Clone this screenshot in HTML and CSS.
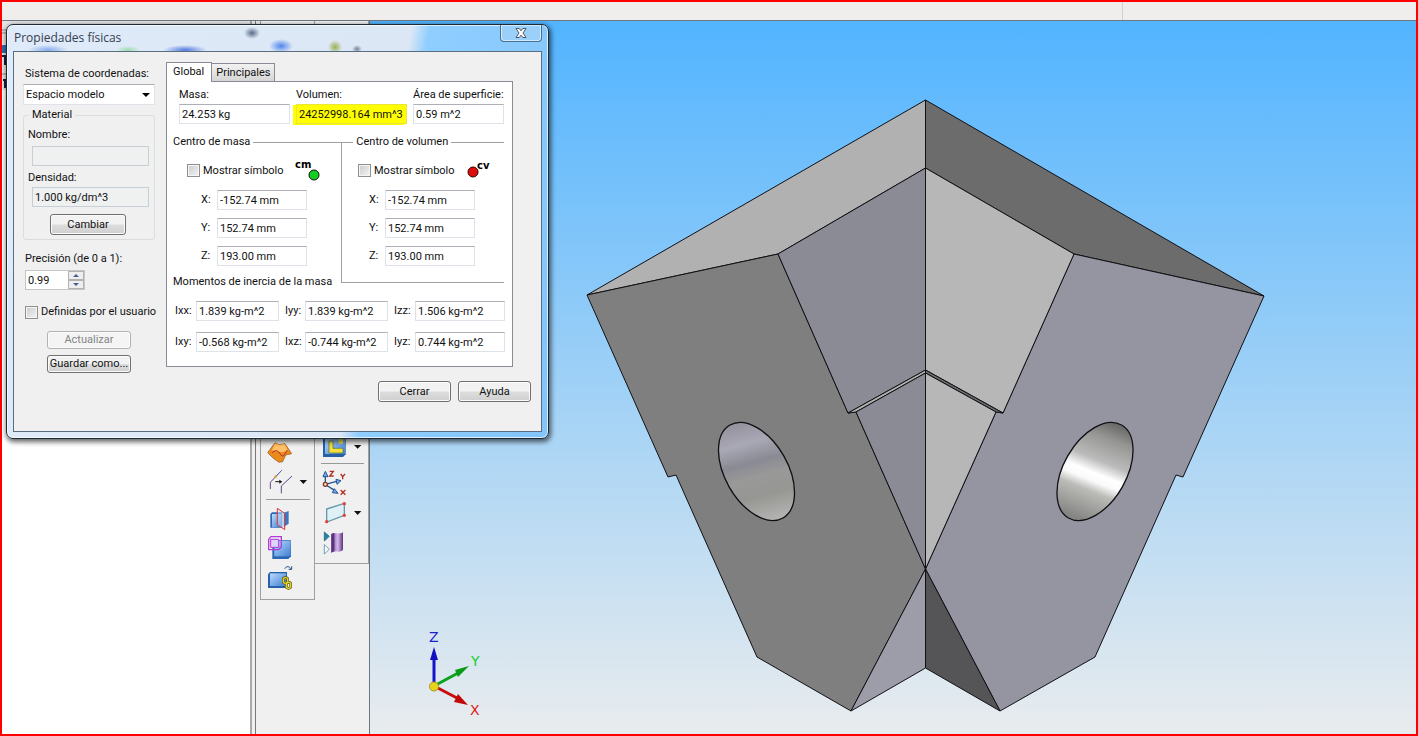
FILE: index.html
```
<!DOCTYPE html>
<html lang="es">
<head>
<meta charset="utf-8">
<title>Propiedades físicas</title>
<link rel="stylesheet" href="styles.css">
</head>
<body>
<div class="app">
  <header class="ribbon"><span class="ribbon-main"></span><span class="ribbon-end"></span></header>
  <div class="workspace">
    <aside class="tree">
      <div class="tree-tools">
        <svg class="tree-icon" viewBox="0 0 6 68" aria-hidden="true"><path d="M0 9h6M0 12h6M0 53h6" stroke="#8b8b8b"/><path d="M0 24h6v8H0z" fill="#2d6fb5"/><path d="M0 35h6M3 35v9M1 59h5M3 59v8" stroke="#14204a" stroke-width="2"/></svg>
      </div>
    </aside>
    <div class="splitter"></div>
    <nav class="tools" aria-label="Herramientas">
      <div class="tool-column column-a">
        <button class="tool" aria-label="Superficie"><svg viewBox="63 30 132 78"><path d="M68 68l22-30 12 6 18-3 20 30-18 4-9 20-11 2-17-12z" fill="#e88a1c" stroke="#945010" stroke-width="2"/><path d="M90 40l13 5 16-3 10 20-20 5-28-6z" fill="#ffc067"/><path d="M82 68c14-14 20 0 27 8s12-8 18-16" fill="none" stroke="#b3242c" stroke-width="3"/></svg></button>
        <button class="tool" aria-label="Desplazar curva"><svg viewBox="63 108 132 90"><path d="M76 177v-20l34-36M109 190v-22l32-30" fill="none" stroke="#62458a" stroke-width="3"/><path d="M94 138l16-17" stroke="#4d80bd" stroke-width="3"/><circle cx="92" cy="140" r="4" fill="#e5a23b"/><path d="M91 155h14" stroke="#111" stroke-width="3"/><path d="M103 149l9 6-9 6zM164 150h22l-11 12z" fill="#111"/></svg></button>
        <hr>
        <button class="tool" aria-label="Plano de corte"><svg viewBox="63 222 132 90"><defs><linearGradient id="blue" x2="1" y2="1"><stop stop-color="#b9dcff"/><stop offset="1" stop-color="#3f7fd0"/></linearGradient></defs><path d="M76 252l5-5h31v46H76z" fill="#2c66b5"/><path d="M81 252h29v40H81z" fill="url(#blue)"/><path d="M116 248l15-5v38l-15 10z" fill="#3978c5"/><path d="M97 235l22 15v49l-22-15z" fill="#cfe0f4" fill-opacity=".5" stroke="#e03434" stroke-width="3"/></svg></button>
        <button class="tool" aria-label="Contorno"><svg viewBox="63 312 132 90"><path d="M82 340l8-9h48v48l-8 8H82z" fill="#2c66b5"/><path d="M88 333h49v46H88z" fill="url(#blue)"/><path d="M71 328l7-8h31v31l-8 8H71z" fill="none" stroke="#b338dd" stroke-width="4"/><path d="M77 328h24v24H77z" fill="#dcd4fa" stroke="#b338dd" stroke-width="3"/></svg></button>
        <button class="tool" aria-label="Vincular pieza"><svg viewBox="63 402 132 90"><path d="M69 433l6-7h51v40l-6 8H69z" fill="#285fa9"/><path d="M75 430h48v38H75z" fill="url(#blue)"/><path d="M119 416c6-9 14-7 18 0M140 409v9h-9" fill="none" stroke="#1e477f" stroke-width="3"/><g fill="none" stroke="#5e5711" stroke-width="8"><rect x="115" y="443" width="13" height="17" rx="6"/><rect x="124" y="457" width="13" height="18" rx="6"/></g><g fill="none" stroke="#e3d51e" stroke-width="4"><rect x="115" y="443" width="13" height="17" rx="6"/><rect x="124" y="457" width="13" height="18" rx="6"/></g></svg></button>
      </div>
      <div class="tool-column column-b">
        <button class="tool tool-short" aria-label="Operación"><svg viewBox="228 24 132 66"><path d="M234 22h68v48l-8 8h-60z" fill="#275ea8"/><path d="M240 20h60v49h-60z" fill="url(#blue)"/><path d="M252 30h12v22h30v14h-42z" fill="#f5df38" stroke="#5c6b3b" stroke-width="2"/><path d="M281 22h13v16h-13z" fill="#f5df38"/><path d="M327 42h22l-11 11z" fill="#111"/></svg></button>
        <hr>
        <button class="tool" aria-label="Sistema de coordenadas"><svg viewBox="228 108 132 90"><path d="M241 160v-24M241 160l34-9M243 162l27 17" stroke="#235397" stroke-width="4"/><path d="M234 137l7-16 8 16zM273 145l15 4-12 11zM268 173l11 14-17-2z" fill="#7daadf" stroke="#235397" stroke-width="3"/><circle cx="241" cy="160" r="6" fill="#f6e7c5" stroke="#8a321d" stroke-width="4"/><path d="M254 121h11l-11 14h12M287 129l6 8 7-8M293 137v8M287 177l14 14M301 177l-14 14" fill="none" stroke="#b42c25" stroke-width="4"/></svg></button>
        <button class="tool" aria-label="Plano"><svg viewBox="228 198 132 90"><path d="M245 234l53-17v36l-53 20z" fill="#dff1f6" stroke="#6799ab" stroke-width="4"/><g fill="#e34036"><circle cx="298" cy="218" r="5"/><circle cx="245" cy="272" r="5"/><circle cx="298" cy="253" r="5"/></g><path d="M327 240h22l-11 12z" fill="#111"/></svg></button>
        <button class="tool" aria-label="Simetría"><svg viewBox="228 288 132 90"><defs><linearGradient id="purple"><stop stop-color="#6b4390"/><stop offset=".55" stop-color="#d7b9ec"/><stop offset="1" stop-color="#5b317d"/></linearGradient></defs><path d="M238 303v27l15-14z" fill="#2188a8" stroke="#19547e" stroke-width="2"/><path d="M238 341v28l15-14z" fill="#fff" stroke="#2c719c" stroke-width="2"/><path d="M259 309c10-8 24 4 35-5v53c-11 11-25-1-35 8z" fill="url(#purple)"/><path d="M259 309v56l9-4v-55z" fill="#5a3280"/></svg></button>
      </div>
    </nav>
    <main class="viewport">
      <svg class="model" viewBox="370 21 1046 713" preserveAspectRatio="xMidYMid slice" role="img" aria-label="Modelo 3D">
        <defs>
          <linearGradient id="hole-left" gradientUnits="userSpaceOnUse" x1="742" y1="424" x2="768" y2="520"><stop stop-color="#96949f"/><stop offset=".2" stop-color="#a9a8b5"/><stop offset=".4" stop-color="#8a8a94"/><stop offset=".55" stop-color="#999"/><stop offset=".75" stop-color="#969693"/><stop offset="1" stop-color="#b2b2b0"/></linearGradient>
          <linearGradient id="hole-right" gradientUnits="userSpaceOnUse" x1="1117" y1="424" x2="1079" y2="518"><stop stop-color="#686866"/><stop offset=".17" stop-color="#969694"/><stop offset=".4" stop-color="#bbb"/><stop offset=".53" stop-color="#fff"/><stop offset=".61" stop-color="#fafafa"/><stop offset=".71" stop-color="#bbbbb8"/><stop offset="1" stop-color="#868684"/></linearGradient>
          <clipPath id="clip-left"><ellipse cx="756.5" cy="471.5" rx="53" ry="31" transform="rotate(60.3 756.5 471.5)"/></clipPath>
          <clipPath id="clip-right"><ellipse cx="1095" cy="471.500" rx="53" ry="31" transform="rotate(-60.3 1095 471.5)"/></clipPath>
        </defs>
        <g stroke="#101014" stroke-width="1" stroke-linejoin="round">
          <path fill="#b1b1b1" d="M925.500 100V168L778 254 587 295Z"/>
          <path fill="#6c6c6c" d="M925.500 100L1264 296 1074 254 925.500 168Z"/>
          <path fill="#7f7f7f" d="M587 295L778 254 848 413 856 412 925.500 569 851 711 757 657 676 475 668 477Z"/>
          <path fill="#9595a1" d="M1264 296L1183 477 1176 475 1095 657 1000 711 925.500 569 996 412 1003 413 1074 254Z"/>
          <path fill="#8b8b95" d="M925.500 168L778 254 848 413 925.500 370Z"/>
          <path fill="#b7b7b7" d="M925.500 168L1074 254 1003 413 925.500 370Z"/>
          <path fill="#b0b0b0" d="M848 413L925.500 370V373L856 412Z"/>
          <path fill="#6c6c6c" d="M1003 413L925.500 370V373L996 412Z"/>
          <path fill="#8b8b95" d="M856 412L925.500 373V569Z"/>
          <path fill="#b7b7b7" d="M996 412L925.500 373V569Z"/>
          <path fill="#9d9da9" d="M925.500 569L851 711 925.500 668Z"/>
          <path fill="#555557" d="M925.500 569L1000 711 925.500 668Z"/>
        </g>
        <path clip-path="url(#clip-left)" fill="url(#hole-left)" d="M700 410h110v120H700z"/>
        <path clip-path="url(#clip-right)" fill="url(#hole-right)" d="M1040 410h110v120h-110z"/>
        <g fill="none" stroke="#101014" stroke-width="1.300">
          <ellipse cx="756.5" cy="471.5" rx="53.500" ry="31.400" transform="rotate(60.3 756.5 471.5)"/>
          <ellipse cx="1095" cy="471.5" rx="53.500" ry="31.400" transform="rotate(-60.3 1095 471.5)"/>
        </g>
        <path d="M434 686V656" stroke="#1414c8" stroke-width="3"/><path d="M430 660L434 647 438 660Z" fill="#1010c0"/>
        <path d="M434 686L458 673" stroke="#0ca21d" stroke-width="3"/><path d="M455 670L469 666 458 677Z" fill="#079b16"/>
        <path d="M434 686L457 698" stroke="#c90c0c" stroke-width="3"/><path d="M458 694L468 705 454 702Z" fill="#c40808"/>
        <circle cx="434" cy="686.500" r="4.500" fill="#e8d31b" stroke="#ac961b"/>
        <g class="axis-label"><text x="429" y="642" fill="#2020cf">Z</text><text x="471" y="666" fill="#18cf28">Y</text><text x="470" y="715" fill="#e01a1a">X</text></g>
      </svg>
    </main>
  </div>

  <section class="dialog" role="dialog" aria-labelledby="dialog-title">
    <div class="titlebar">
      <h1 id="dialog-title">Propiedades físicas</h1>
      <button class="close" aria-label="Cerrar ventana"><svg viewBox="0 0 12 10"><path d="M1 .5h3.200L6 2.800 7.800.500H11L8 5l3 4.500H7.800L6 7.200 4.200 9.500H1L4 5z" fill="#fff" stroke="#4c5668"/></svg></button>
    </div>
    <form class="client">
      <div class="left">
        <label class="inset" for="coords">Sistema de coordenadas:</label>
        <div class="select-wrap"><select id="coords"><option>Espacio modelo</option></select></div>
        <fieldset class="material">
          <legend>Material</legend>
          <label for="name">Nombre:</label><input id="name" readonly>
          <label for="density">Densidad:</label><input id="density" value="1.000 kg/dm^3" readonly>
          <button type="button" class="btn">Cambiar</button>
        </fieldset>
        <label class="inset" for="precision">Precisión (de 0 a 1):</label>
        <div class="spinner">
          <input id="precision" value="0.99">
          <div class="steps"><button type="button" aria-label="Aumentar"><svg viewBox="0 0 6 3"><path d="M0 3L3 0 6 3z"/></svg></button><button type="button" aria-label="Disminuir"><svg viewBox="0 0 6 3"><path d="M0 0L3 3 6 0z"/></svg></button></div>
        </div>
        <label class="check user-check"><input type="checkbox">Definidas por el usuario</label>
        <div class="stack"><button type="button" class="btn small" disabled>Actualizar</button><button type="button" class="btn small">Guardar como...</button></div>
      </div>
      <div class="right">
        <div class="tabs" role="tablist"><button type="button" class="tab active" role="tab" aria-selected="true">Global</button><button type="button" class="tab" role="tab" aria-selected="false">Principales</button></div>
        <div class="panel" role="tabpanel">
          <div class="totals">
            <div class="field"><label for="mass">Masa:</label><input id="mass" value="24.253 kg"></div>
            <div class="field marked"><label for="volume">Volumen:</label><input id="volume" value="24252998.164 mm^3"></div>
            <div class="field"><label for="area">Área de superficie:</label><input id="area" value="0.59 m^2"></div>
          </div>
          <div class="heads"><h2>Centro de masa</h2><span class="rule mass-rule"></span><h2>Centro de volumen</h2><span class="rule"></span></div>
          <div class="centers">
            <div class="center mass-center">
              <div class="symbol"><label class="check"><input type="checkbox">Mostrar símbolo</label>
                <svg class="marker" viewBox="0 0 26 22" aria-hidden="true"><text x="0" y="8">cm</text><circle cx="19" cy="15" r="5" fill="#12ce22" stroke="#111"/></svg></div>
              <div class="xyz"><label for="mx">X:</label><input id="mx" value="-152.74 mm"><label for="my">Y:</label><input id="my" value="152.74 mm"><label for="mz">Z:</label><input id="mz" value="193.00 mm"></div>
            </div>
            <div class="center volume-center">
              <div class="symbol"><label class="check"><input type="checkbox">Mostrar símbolo</label>
                <svg class="marker" viewBox="0 0 26 22" aria-hidden="true"><circle cx="7" cy="12" r="5" fill="#e00d0d" stroke="#300"/><text x="11" y="9">cv</text></svg></div>
              <div class="xyz"><label for="vx">X:</label><input id="vx" value="-152.74 mm"><label for="vy">Y:</label><input id="vy" value="152.74 mm"><label for="vz">Z:</label><input id="vz" value="193.00 mm"></div>
            </div>
          </div>
          <div class="heads moments-head"><h2>Momentos de inercia de la masa</h2><span class="rule"></span></div>
          <div class="moments">
            <label for="ixx">Ixx:</label><input id="ixx" value="1.839 kg-m^2">
            <label for="iyy">Iyy:</label><input id="iyy" value="1.839 kg-m^2">
            <label for="izz">Izz:</label><input id="izz" value="1.506 kg-m^2">
            <label for="ixy">Ixy:</label><input id="ixy" value="-0.568 kg-m^2">
            <label for="ixz">Ixz:</label><input id="ixz" value="-0.744 kg-m^2">
            <label for="iyz">Iyz:</label><input id="iyz" value="0.744 kg-m^2">
          </div>
        </div>
        <div class="actions"><button type="button" class="btn">Cerrar</button><button type="button" class="btn">Ayuda</button></div>
      </div>
    </form>
  </section>
</div>
</body>
</html>
```
FILE: styles.css
```
* { box-sizing: border-box; }
body { margin: 0; font: 11px/14px Roboto, "Liberation Sans", Arial, sans-serif; color: #111; }
button, input, select { font: inherit; color: inherit; margin: 0; }
button { padding: 0; }
h1, h2 { margin: 0; font: inherit; }

.app { position: relative; display: flex; flex-direction: column; height: 100vh; border: 2px solid #f00; overflow: hidden; }
.ribbon { display: flex; flex: none; height: 19px; background: #f0eeed; border-bottom: 1px solid #6f7780; }
.ribbon-main { flex: 1; }
.ribbon-end { width: 294px; border-left: 1px solid #d3d1d0; }
.workspace { display: flex; flex: 1; min-height: 0; }
.tree { width: 248px; background: #fff; }
.tree-tools { height: 69px; background: #e6e6e6; }
.tree-icon { display: block; width: 6px; height: 68px; }
.splitter { width: 6px; background: #f0f0f0; border-left: 2px solid #aaa; border-right: 1px solid #777; }

.tools { display: flex; align-items: flex-start; width: 113px; padding-left: 4px; background: #f0f0f0; }
.tool-column { padding: 419px 4px 0 5px; border: solid #a0a0a0; border-width: 0 1px 1px 0; }
.column-a { width: 55px; padding-bottom: 5px; border-left-width: 1px; }
.column-b { width: 54px; padding-top: 418px; padding-left: 6px; padding-bottom: 6px; }
.tool { display: block; width: 44px; height: 30px; border: 0; background: none; }
.column-a .tool:first-child { height: 26px; }
.tool-short { height: 22px; }
.tool svg { display: block; width: 100%; height: 100%; }
.tools hr { margin: 3px 0 4px; border: 0; border-top: 1px solid #999; }
.column-b hr { margin: 2px 0 3px; }

.viewport { flex: 1; min-width: 0; border-left: 1px solid #697784; background: linear-gradient(#52b4ff, #e9ecee); }
.model { display: block; width: 100%; height: 100%; }
.axis-label { font: 14px "DejaVu Sans", sans-serif; }

.dialog { position: absolute; left: 4px; top: 22px; width: 543px; padding: 0 6px 6px; border: 1px solid #1c2a38; border-radius: 7px; background: linear-gradient(100deg, #dfeafa 0, #dce7f5 66%, #8fceff 69%, #83c5fb 100%); box-shadow: inset 0 0 0 1px #ffffffb0, 1px 2px 5px 1px #0009; }
.titlebar { display: flex; justify-content: space-between; height: 26px; padding-left: 1px; background: radial-gradient(ellipse 12px 7px at 268px 21px, #4f86ee, transparent), radial-gradient(ellipse 8px 6px at 239px 8px, #5a6b84, transparent), radial-gradient(ellipse 22px 5px at 172px 25px, #527be0, transparent), radial-gradient(ellipse 12px 4px at 115px 25px, #9bdcae, transparent), radial-gradient(ellipse 20px 5px at 35px 25px, #85abef, transparent), radial-gradient(ellipse 7px 7px at 322px 22px, #9caf52, transparent), radial-gradient(ellipse 5px 4px at 344px 24px, #76809b, transparent); }
.titlebar h1 { font: 12px/26px "Open Sans", "Noto Sans", sans-serif; color: #34404e; }
.close { display: flex; justify-content: center; align-items: center; width: 42px; height: 17px; border: 1px solid #47718f; border-top: 0; border-radius: 0 0 4px 4px; background: #9bd0fb; box-shadow: inset 0 0 0 1px #d3eaff; }
.close svg { width: 12px; height: 10px; }
.client { display: flex; border: 1px solid #5b6e80; background: #f0f0f0; padding: 10px 10px 29px 9px; }

input, select { display: block; width: 100%; min-width: 0; height: 20px; padding: 0 2px; border: 1px solid #dde3e8; border-top-color: #adb0b6; border-radius: 0; outline: 0; background: #fff; }
label { display: block; white-space: nowrap; }
.btn { width: 73px; height: 21px; border: 1px solid #707070; border-radius: 3px; background: linear-gradient(#f2f2f2 0 48%, #dddddd 52%, #cfcfcf); box-shadow: inset 0 0 0 1px #fbfbfb; white-space: nowrap; }
.btn:disabled { color: #858585; border-color: #b0b2b4; background: #f4f4f4; }

.left { width: 132px; padding-top: 5px; }
.inset { padding-left: 2px; }
.select-wrap { position: relative; margin-top: 3px; }
.select-wrap::after { content: ""; position: absolute; right: 5px; top: 9px; border: solid transparent; border-width: 4px 4px 0; border-top-color: #000; }
select { height: 21px; appearance: none; }
.material { margin: 3px 0 12px; padding: 6px 6px 4px 4px; border: 1px solid #dadde0; border-radius: 3px; min-width: 0; }
.material legend { padding: 0 3px; margin-left: 1px; }
.material input { width: 117px; margin: 4px 0 5px 4px; background: #eff0f0; border-color: #c6ced6; }
.material #density { margin: 2px 0 7px 4px; }
.material .btn { display: block; width: 76px; margin-left: 22px; }
.spinner { display: flex; width: 60px; height: 20px; margin: 4px 0 0 2px; border: 1px solid #c3c8cd; background: #fff; }
.spinner input { flex: 1; height: 18px; border: 0; }
.steps { display: grid; grid-template-rows: 1fr 1fr; width: 16px; }
.steps button { display: flex; align-items: center; justify-content: center; border: 1px solid #b2b2b2; background: #eee; }
.steps svg { width: 6px; height: 3px; fill: #4b5c8c; }
.check { display: flex; align-items: center; gap: 3px; height: 14px; }
.check input { appearance: none; flex: none; width: 13px; height: 13px; padding: 0; border: 1px solid #8e8f8f; background: linear-gradient(135deg, #c9cccf, #f4f4f4); box-shadow: inset 0 0 0 1px #f5f5f5; }
.user-check { margin: 15px 0 12px 2px; }
.stack { display: grid; gap: 6px; margin-left: 24px; }
.small { width: 84px; height: 18px; }

.right { flex: 1; margin-left: 11px; }
.tabs { display: flex; align-items: flex-end; height: 19px; }
.tab { height: 18px; padding: 0 4px; border: 1px solid #898c95; border-bottom: 0; border-left: 0; background: linear-gradient(#f2f2f2, #d5d5d5); }
.tab.active { position: relative; height: 20px; margin-bottom: -1px; padding: 0 7px 2px 6px; border-left: 1px solid #898c95; background: #fff; }
.panel { width: 347px; padding: 6px 8px 14px 6px; border: 1px solid #898c95; background: #fff; }
.totals { display: grid; grid-template-columns: 111px 111px 90px; gap: 6px; margin-left: 6px; }
.field { display: grid; gap: 2px; }
.marked input { background: #ff0; border-color: #e9e63a; box-shadow: -3px 1px 0 #ff0; }
.heads { display: flex; align-items: center; height: 14px; margin-top: 11px; gap: 3px; white-space: nowrap; }
.rule { flex: 1; border-top: 1px solid #a0a0a0; }
.mass-rule { flex: none; width: 100px; }
.centers { display: grid; grid-template-columns: 169px 1fr; margin-top: -7px; padding-bottom: 17px; }
.center { padding-top: 15px; }
.mass-center { margin-bottom: -17px; border-right: 1px solid #a0a0a0; padding-left: 14px; }
.volume-center { padding-left: 16px; }
.symbol { display: flex; height: 27px; align-items: center; gap: 16px; }
.symbol .check { width: 92px; }
.marker { width: 26px; height: 22px; font: bold 10px "DejaVu Sans", sans-serif; }
.xyz { display: grid; grid-template-columns: 16px 90px; gap: 8px 0; margin: 6px 0 0 14px; align-items: center; }
.volume-center .xyz { margin-left: 11px; }
.moments-head { margin-top: -8px; gap: 10px; }
.moments { display: grid; grid-template-columns: 21px 83px 26px 83px 27px 90px; row-gap: 11px; margin: 12px 0 0 2px; align-items: center; }
.moments label:nth-of-type(3n+2), .moments label:nth-of-type(3n) { padding-left: 6px; }
.actions { display: flex; justify-content: flex-end; gap: 7px; margin-top: 14px; }
```
